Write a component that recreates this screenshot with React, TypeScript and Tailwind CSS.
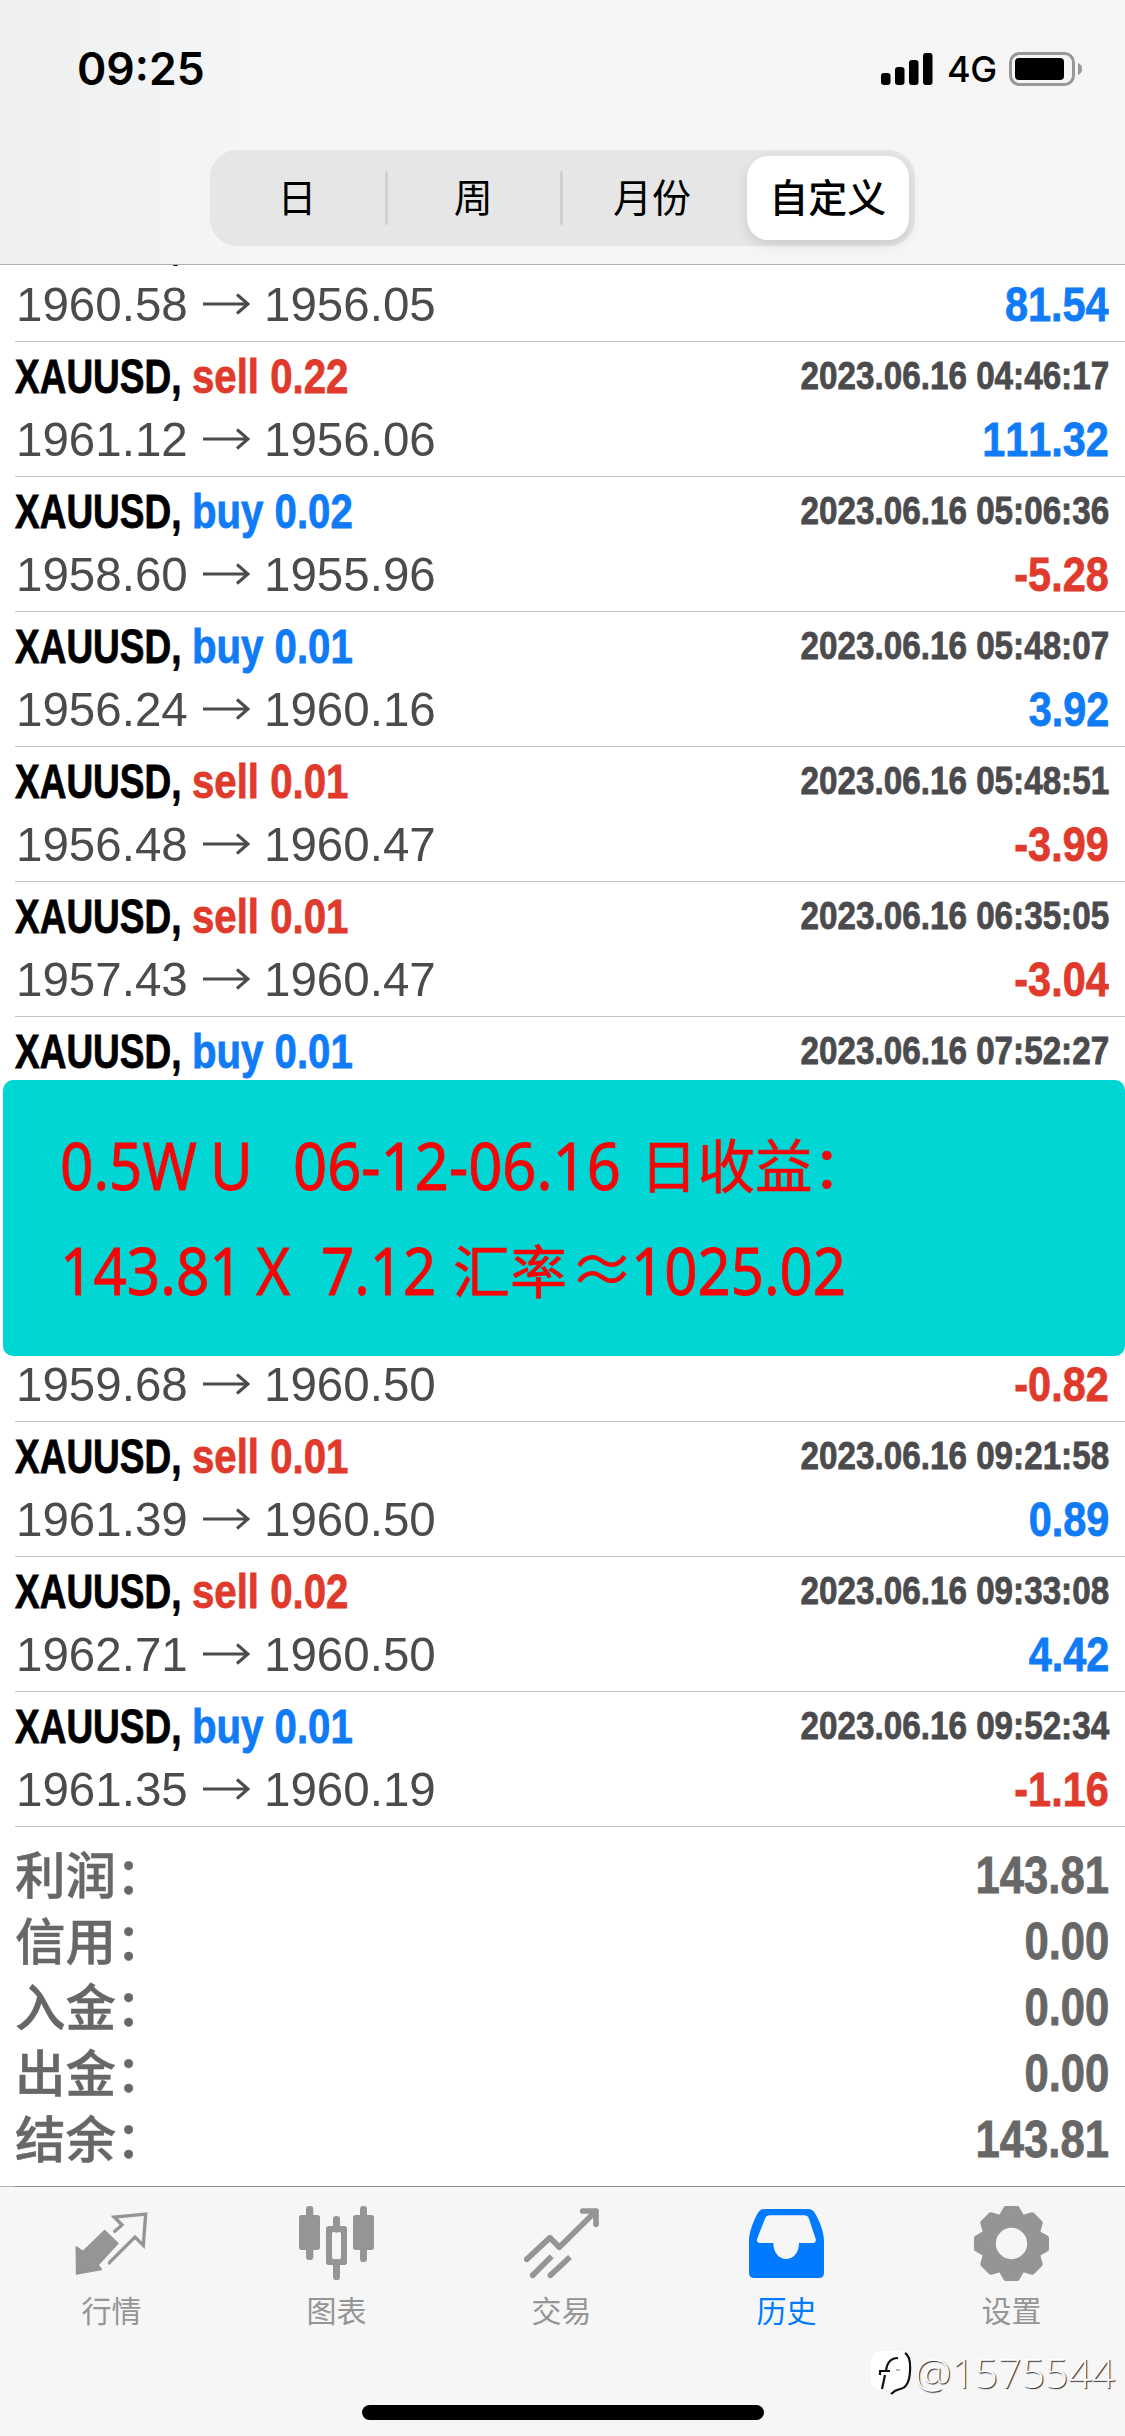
import type { ReactNode } from 'react';

// Rows behind the header or the note only carry the parts that stay visible
const trades = [
  { symbol: 'XAUUSD,', side: '', lots: '', open: '1960.58', close: '1956.05', time: '', profit: '81.54' },
  { symbol: 'XAUUSD,', side: 'sell', lots: '0.22', open: '1961.12', close: '1956.06', time: '2023.06.16 04:46:17', profit: '111.32' },
  { symbol: 'XAUUSD,', side: 'buy', lots: '0.02', open: '1958.60', close: '1955.96', time: '2023.06.16 05:06:36', profit: '-5.28' },
  { symbol: 'XAUUSD,', side: 'buy', lots: '0.01', open: '1956.24', close: '1960.16', time: '2023.06.16 05:48:07', profit: '3.92' },
  { symbol: 'XAUUSD,', side: 'sell', lots: '0.01', open: '1956.48', close: '1960.47', time: '2023.06.16 05:48:51', profit: '-3.99' },
  { symbol: 'XAUUSD,', side: 'sell', lots: '0.01', open: '1957.43', close: '1960.47', time: '2023.06.16 06:35:05', profit: '-3.04' },
  { symbol: 'XAUUSD,', side: 'buy', lots: '0.01', open: '', close: '', time: '2023.06.16 07:52:27', profit: '' },
  { symbol: '', side: '', lots: '', open: '', close: '', time: '', profit: '' },
  { symbol: '', side: '', lots: '', open: '1959.68', close: '1960.50', time: '', profit: '-0.82' },
  { symbol: 'XAUUSD,', side: 'sell', lots: '0.01', open: '1961.39', close: '1960.50', time: '2023.06.16 09:21:58', profit: '0.89' },
  { symbol: 'XAUUSD,', side: 'sell', lots: '0.02', open: '1962.71', close: '1960.50', time: '2023.06.16 09:33:08', profit: '4.42' },
  { symbol: 'XAUUSD,', side: 'buy', lots: '0.01', open: '1961.35', close: '1960.19', time: '2023.06.16 09:52:34', profit: '-1.16' }
];

const summary = [
  { label: '利润', value: '143.81' },
  { label: '信用', value: '0.00' },
  { label: '入金', value: '0.00' },
  { label: '出金', value: '0.00' },
  { label: '结余', value: '143.81' }
];

const gearTeeth = [0, 45, 90, 135, 180, 225, 270, 315];

const tabs = [
  {
    label: '行情',
    icon: (
      <>
        <path
          d="M7 123L27 137L92 74L131 112L72 177L82 190L8 204Z"
          fill="currentColor"
          stroke="currentColor"
          strokeWidth="5"
          strokeLinejoin="round"
        />
        <path d="M119 79L144 57L121 33L215 24L208 118L183 93L106 170" fill="none" stroke="currentColor" strokeWidth="10" />
        <circle cx="106" cy="171" r="5" fill="currentColor" />
      </>
    )
  },
  {
    label: '图表',
    icon: (
      <g fill="currentColor">
        <rect x="21" y="0" width="22" height="162" rx="10" />
        <rect x="0" y="27" width="63" height="105" rx="8" />
        <rect x="102" y="30" width="21" height="50" rx="10" />
        <rect x="102" y="160" width="21" height="62" rx="10" />
        <path
          fillRule="evenodd"
          d="M89 60H136Q144 60 144 68V169Q144 177 136 177H89Q81 177 81 169V68Q81 60 89 60ZM105 77Q99 77 99 84V153Q99 160 105 160H120Q126 160 126 153V84Q126 77 120 77Z"
        />
        <rect x="183" y="0" width="21" height="168" rx="10" />
        <rect x="162" y="27" width="63" height="105" rx="8" />
      </g>
    )
  },
  {
    label: '交易',
    icon: (
      <g fill="none" stroke="currentColor" strokeWidth="17">
        <path d="M8 160L78 95L106 124L216 15M176 15H216V55" strokeLinecap="round" strokeLinejoin="round" />
        <path d="M26 208L83 151M79 208L138 153" />
        <circle cx="26" cy="208" r="4" strokeWidth="9" />
        <circle cx="79" cy="208" r="4" strokeWidth="9" />
      </g>
    )
  },
  {
    label: '历史',
    active: true,
    icon: (
      <path
        fill="currentColor"
        fillRule="evenodd"
        d="M0 100C1 75 16 38 27 20Q34 9 48 9H177Q190 9 197 20C213 46 225 80 225 105V200Q225 216 209 216H16Q0 216 0 200ZM33 111H73C73 140 90 159 111 159C134 159 150 140 150 111H193Q203 110 200 98L180 38Q176 28 165 28H64Q52 28 48 38L25 97Q21 110 33 111Z"
      />
    )
  },
  {
    label: '设置',
    icon: (
      <g transform="translate(112.5 112.5)" fill="currentColor">
        <circle r="67" fill="none" stroke="currentColor" strokeWidth="40" />
        {gearTeeth.map((angle) => (
          <path
            key={angle}
            d="M-31 -80L-17 -105H17L31 -80Z"
            transform={`rotate(${angle})`}
            stroke="currentColor"
            strokeWidth="15"
            strokeLinejoin="round"
          />
        ))}
      </g>
    )
  }
];

function StatusBar() {
  return (
    <div className="flex h-[138px] items-center justify-between pl-[77px] pr-[42px]">
      <span className="text-[44.500px] font-semibold">09:25</span>
      <div className="flex items-center">
        <svg className="h-8 w-[52px]" viewBox="0 0 52 32">
          <rect x="0" y="20" width="9.5" height="12" rx="3" />
          <rect x="14" y="14" width="9.5" height="18" rx="3" />
          <rect x="28" y="7" width="9.5" height="25" rx="3" />
          <rect x="42" y="0" width="9.5" height="32" rx="3" />
        </svg>
        <span className="ml-[14px] w-[62px] text-[36px] font-medium tracking-[-0.5px]">4G</span>
        <svg className="h-[34px] w-[74px]" viewBox="0 0 74 34">
          <rect x="1.5" y="1.5" width="63" height="31" rx="9" fill="none" stroke="#98989a" strokeWidth="3" />
          <rect x="6" y="6" width="49" height="22" rx="4" />
          <path d="M69 11Q73 12.500 73 17Q73 21.500 69 23Z" fill="#98989a" />
        </svg>
      </div>
    </div>
  );
}

function Segments() {
  return (
    <div className="mx-auto mt-3 grid h-24 w-[705px] grid-cols-4 rounded-[27px] bg-[#e6e6e7] text-center text-[39px] leading-[95px]">
      <span className="relative -left-px">日</span>
      <span className="relative -left-px">
        周
        <i className="absolute left-0 top-[21px] h-[54px] w-[3px] rounded bg-[#d0d0d2]" />
        <i className="absolute -right-px top-[21px] h-[54px] w-[3px] rounded bg-[#d0d0d2]" />
      </span>
      <span className="pl-[3px]">月份</span>
      <span className="my-1.5 ml-2 mr-1.5 rounded-[21px] bg-white font-medium leading-[83px] shadow-[0_4px_12px_rgba(0,0,0,0.13)]">
        自定义
      </span>
    </div>
  );
}

// Bold text squeezed to a condensed width
function Condensed({ className, children }: { className: string; children: ReactNode }) {
  return (
    <span
      className={`inline-block whitespace-nowrap font-bold [-webkit-text-stroke:0.8px_currentColor] [font-kerning:none] ${className}`}
    >
      {children}
    </span>
  );
}

function Price({ children }: { children: ReactNode }) {
  return <span className="w-[172px] origin-left scale-x-[0.97] [font-kerning:none]">{children}</span>;
}

function Arrow() {
  return (
    <svg className="ml-[15px] mr-[14px] h-6 w-[47px]" viewBox="0 0 47 24" fill="none" stroke="#4b4b4e" strokeWidth="3">
      <path d="M0 12H45M34 2.500L45 12L34 21.500" />
    </svg>
  );
}

function TradeRow({ trade }: { trade: (typeof trades)[number] }) {
  return (
    <div className="ml-[15px] h-[135px] border-b border-[#c4c4c6] pr-4 pt-[3px]">
      <div className="flex h-[62px] items-center justify-between">
        {trade.symbol && (
          <div className="flex text-[49px] leading-[62px]">
            <Condensed className="w-[177px] origin-left scale-x-[0.755]">{trade.symbol}</Condensed>
            {trade.side && (
              <Condensed
                className={`origin-left scale-x-[0.82] ${trade.side === 'buy' ? 'text-[#0f7bf6]' : 'text-[#e03a2c]'}`}
              >
                {trade.side} {trade.lots}
              </Condensed>
            )}
          </div>
        )}
        {trade.time && (
          <Condensed className="origin-right scale-x-[0.852] text-[39px] text-[#4b4b4e]">{trade.time}</Condensed>
        )}
      </div>
      {trade.open && (
        <div className="flex h-16 items-center justify-between text-[49px] leading-16 text-[#4b4b4e]">
          <div className="flex items-center pl-px">
            <Price>{trade.open}</Price>
            <Arrow />
            <Price>{trade.close}</Price>
          </div>
          <Condensed
            className={`origin-right scale-x-[0.845] ${trade.profit.startsWith('-') ? 'text-[#e03a2c]' : 'text-[#0f7bf6]'}`}
          >
            {trade.profit}
          </Condensed>
        </div>
      )}
    </div>
  );
}

function NoteText({ className, children }: { className: string; children: ReactNode }) {
  return (
    <span className={`origin-left -translate-y-[2px] [-webkit-text-stroke:0.8px_currentColor] ${className}`}>
      {children}
    </span>
  );
}

function Note() {
  return (
    <div className="absolute left-[3px] top-[815px] h-[276px] w-[1122px] rounded-[10px] bg-[#00d7d5] pl-[57px] pt-[34px] font-['Noto_Sans','Noto_Sans_CJK_SC',sans-serif] text-[66px] leading-[105px] text-[#f50505]">
      <div className="flex whitespace-nowrap">
        <NoteText className="w-[150px] scale-x-[0.885]">0.5W</NoteText>
        <NoteText className="w-[83px] scale-x-[0.885]">U</NoteText>
        <NoteText className="w-[347px] scale-x-[0.905]">06-12-06.16</NoteText>
        <span className="text-[57.500px] [-webkit-text-stroke:0.6px_currentColor]">日收益：</span>
      </div>
      <div className="flex whitespace-nowrap">
        <NoteText className="w-[196px] scale-x-[0.885]">143.81</NoteText>
        <NoteText className="w-[65px] scale-x-[0.885]">X</NoteText>
        <NoteText className="w-[132px] scale-x-[0.88]">7.12</NoteText>
        <span className="w-[116px] text-[57px] [-webkit-text-stroke:0.6px_currentColor]">汇率</span>
        <span className="w-[62px] -translate-y-[3px]">≈</span>
        <NoteText className="scale-x-[0.88]">1025.02</NoteText>
      </div>
    </div>
  );
}

function TabBar() {
  return (
    <nav className="relative h-[250px] bg-[#f6f6f6]">
      <div className="h-px border-l-[15px] border-[#b4b4b6] bg-[#8c8c8f]" />
      <div className="-ml-px grid w-[1125px] grid-cols-5 pt-[19px]">
        {tabs.map((tab) => (
          <div key={tab.label} className={`flex flex-col items-center ${tab.active ? 'text-[#007aff]' : 'text-[#959595]'}`}>
            <svg className="size-[75px]" viewBox="0 0 225 225">
              {tab.icon}
            </svg>
            <span className="mt-[10px] text-[30px] leading-[42px]">{tab.label}</span>
          </div>
        ))}
      </div>
      <div className="mx-auto mt-[72px] h-[15px] w-[402px] rounded-full bg-black" />
      <div className="absolute right-[10px] top-[165px] flex items-center gap-[3px]">
        <svg className="h-[46px] w-[41px]" viewBox="0 0 41 46">
          <rect x="0" y="0" width="39" height="38" rx="9" fill="white" />
          <path
            d="M11 38L14 24M9 24V20H19M15 20C16 11 20 7 27 7M34 2C39 5 39.500 12 39 20C38.500 31 35 37 29 38Q24 39 20 43"
            fill="none"
            stroke="#111"
            strokeWidth="2.2"
          />
          <path d="M25 19H29" stroke="#777" strokeWidth="1" />
        </svg>
        <span className="-mt-1 font-['Open_Sans',sans-serif] text-[41px] font-light leading-[46px] text-white [text-shadow:1px_1px_1px_rgba(0,0,0,0.85)]">
          @1575544
        </span>
      </div>
    </nav>
  );
}

export default function App() {
  return (
    <div className="flex h-[2436px] w-[1125px] flex-col overflow-hidden bg-white font-['Liberation_Sans','Noto_Sans_CJK_SC',sans-serif] text-black">
      <header className="h-[265px] border-b border-[#b0b0b3] bg-linear-to-r from-[#efefef] via-[#f5f6f8] via-25% to-[#f7f5f5] font-['Inter','Noto_Sans_CJK_SC',sans-serif]">
        <StatusBar />
        <Segments />
      </header>

      <main className="relative h-[1921px] overflow-hidden">
        <div className="-mt-[58px]">
          {trades.map((trade, index) => (
            <TradeRow key={index} trade={trade} />
          ))}
        </div>
        <div className="pl-[15px] pr-4 pt-4 text-[51px] leading-[66px] text-[#676767]">
          {summary.map((item) => (
            <div key={item.label} className="flex h-[66px] items-center justify-between">
              <span className="-mt-2 font-['Noto_Sans_CJK_SC',sans-serif] text-[50.500px] font-medium [-webkit-text-stroke:0.5px_currentColor]">
                {item.label}：
              </span>
              <Condensed className="origin-right scale-x-[0.855]">{item.value}</Condensed>
            </div>
          ))}
        </div>
        <Note />
      </main>

      <TabBar />
    </div>
  );
}
